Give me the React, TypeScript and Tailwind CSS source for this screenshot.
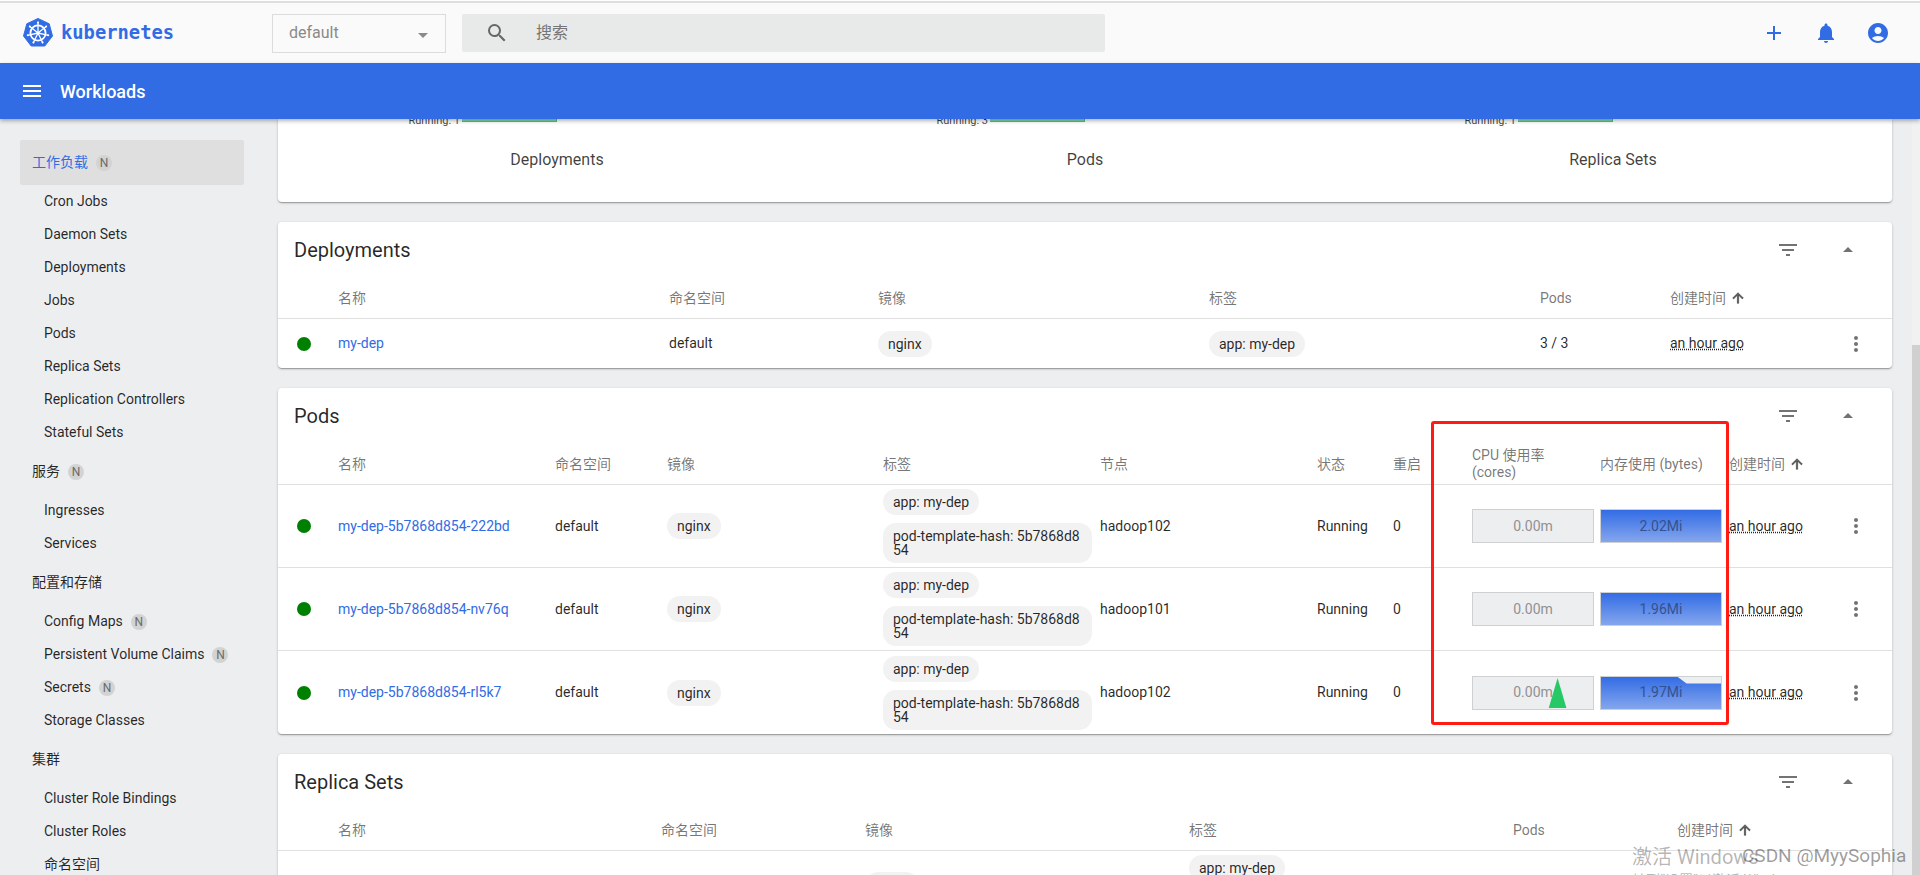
import {
  MdAccountCircle,
  MdAdd,
  MdArrowDropUp,
  MdFilterList,
  MdMenu,
  MdMoreVert,
  MdNotifications,
  MdSearch,
} from 'react-icons/md';

const DEPLOY_COLS = 'grid-cols-[60px_331px_209px_331px_331px_130px_1fr]';
const PODS_COLS = 'grid-cols-[60px_217px_112px_216px_217px_217px_76px_79px_128px_129px_1fr]';
const REPLICA_COLS = 'grid-cols-[60px_323px_204px_324px_324px_164px_1fr]';

const pods = [
  { name: 'my-dep-5b7868d854-222bd', node: 'hadoop102', mem: '2.02Mi', spike: false },
  { name: 'my-dep-5b7868d854-nv76q', node: 'hadoop101', mem: '1.96Mi', spike: false },
  { name: 'my-dep-5b7868d854-rl5k7', node: 'hadoop102', mem: '1.97Mi', spike: true },
];

const navGroups = [
  { title: '工作负载', badge: true, active: true, items: [['Cron Jobs'], ['Daemon Sets'], ['Deployments'], ['Jobs'], ['Pods'], ['Replica Sets'], ['Replication Controllers'], ['Stateful Sets']] },
  { title: '服务', badge: true, items: [['Ingresses'], ['Services']] },
  { title: '配置和存储', items: [['Config Maps', 'N'], ['Persistent Volume Claims', 'N'], ['Secrets', 'N'], ['Storage Classes']] },
  { title: '集群', items: [['Cluster Role Bindings'], ['Cluster Roles'], ['命名空间']] },
];

function KubeLogo() {
  const spokes = [0, 51.4, 102.8, 154.3, 205.7, 257.1, 308.6];
  return (
    <svg width="30" height="30" viewBox="0 0 30 30">
      <path d="M15 0.5 L26.2 5.8 L29.5 18 L21.8 28 L8.2 28 L0.5 18 L3.8 5.8 Z" fill="#326ce5" stroke="#326ce5" strokeWidth="1" strokeLinejoin="round" />
      <circle cx="15" cy="15" r="7.6" fill="none" stroke="#fff" strokeWidth="1.8" />
      <circle cx="15" cy="15" r="1.6" fill="#fff" />
      {spokes.map((a) => (
        <g key={a} transform={`rotate(${a} 15 15)`}>
          <line x1="15" y1="15" x2="15" y2="4.2" stroke="#fff" strokeWidth="1.3" strokeLinecap="round" />
          <circle cx="15" cy="4.6" r="1" fill="#fff" />
        </g>
      ))}
    </svg>
  );
}

function Badge() {
  return (
    <span className="flex h-4 w-4 items-center justify-center rounded-full bg-[#d3d3d3] text-[12px] text-[#6b6b6b]">
      N
    </span>
  );
}

function Sidebar() {
  return (
    <aside className="w-[278px] shrink-0 pt-[21px] text-[14px] text-black/85">
      {navGroups.map((group) => (
        <div key={group.title}>
          <div
            className={`ml-[20px] flex h-[45px] w-[224px] items-center gap-2 rounded-[2px] pl-[12px] ${
              group.active ? 'bg-[#dfdfdf] text-[#326ce5]' : ''
            }`}
          >
            {group.title}
            {group.badge && <Badge />}
          </div>
          {group.items.map(([label, badge]) => (
            <div key={label} className="flex h-[33px] items-center gap-2 pl-[44px]">
              {label}
              {badge && <Badge />}
            </div>
          ))}
        </div>
      ))}
    </aside>
  );
}

function Chip({ children, className = '' }: { children: React.ReactNode; className?: string }) {
  return (
    <span className={`inline-block w-fit rounded-[13px] bg-[#f2f2f2] px-[10px] py-[6px] text-[14px] leading-[14px] text-black/85 ${className}`}>
      {children}
    </span>
  );
}

function CardTitle({ title }: { title: string }) {
  return (
    <div className="flex h-[56px] items-center justify-between pl-[16px] pr-[32px]">
      <h2 className="text-[20px] font-normal text-black/85">{title}</h2>
      <div className="flex items-center gap-[36px] text-black/55">
        <MdFilterList size={24} />
        <MdArrowDropUp size={24} />
      </div>
    </div>
  );
}

function CreatedHead() {
  return (
    <span className="flex items-center gap-[4px]">
      创建时间
      <svg width="16" height="16" viewBox="0 0 24 24" className="text-black/60">
        <path d="M4 12l1.41 1.41L11 7.83V20h2V7.83l5.58 5.59L20 12l-8-8-8 8z" fill="currentColor" stroke="currentColor" strokeWidth="1" />
      </svg>
    </span>
  );
}

function Dot() {
  return <span className="ml-[19px] block h-[14px] w-[14px] rounded-full bg-[#008000]" />;
}

function Age() {
  return <span className="underline decoration-dotted underline-offset-1">an hour ago</span>;
}

function Kebab() {
  return (
    <div className="flex justify-end pr-[24px] text-black/55">
      <MdMoreVert size={24} />
    </div>
  );
}

function Graph({ value, kind, spike }: { value: string; kind: 'cpu' | 'mem'; spike?: boolean }) {
  const memPoints = spike ? '0,0 78,0 87,7 122,7 122,34 0,34' : '0,0 122,0 122,34 0,34';
  return (
    <div className="relative flex h-[34px] w-[122px] items-center justify-center border border-[#cfd0d2] bg-[#edeef0]">
      {kind === 'mem' && (
        <svg className="absolute inset-0 h-full w-full" viewBox="0 0 122 34" preserveAspectRatio="none">
          <defs>
            <linearGradient id="memFill" x1="0" y1="0" x2="0" y2="1">
              <stop offset="0" stopColor="#326ce5" />
              <stop offset="1" stopColor="#85a6ed" />
            </linearGradient>
          </defs>
          <polygon points={memPoints} fill="url(#memFill)" />
        </svg>
      )}
      <span className={`relative text-[14px] ${kind === 'mem' ? 'text-[#34528f]' : 'text-[#909193]'}`}>{value}</span>
      {kind === 'cpu' && spike && (
        <svg className="absolute inset-0 h-full w-full" viewBox="0 0 122 34" preserveAspectRatio="none">
          <polygon points="86,1 77,33 95,33" fill="#27c866" />
        </svg>
      )}
    </div>
  );
}

function ChartLabel({ running, label }: { running: string; label: string }) {
  return (
    <div>
      <div className="flex h-[9px] w-[264px] items-start justify-end gap-[2px] overflow-hidden">
        <span className="-mt-[5px] whitespace-nowrap text-[11px] leading-[14px] text-black/75">{running}</span>
        <span className="block h-[3px] w-[95px] shrink-0 border-b border-r border-[#4fc47f] bg-[#7ddca3]" />
      </div>
      <div className="mt-[20px] text-center text-[16px] leading-[24px] text-black/75">{label}</div>
    </div>
  );
}

const cardClass =
  'rounded-[4px] bg-white shadow-[0_1px_3px_rgba(0,0,0,0.2),0_1px_1px_rgba(0,0,0,0.14),0_2px_1px_-1px_rgba(0,0,0,0.12)]';

export default function App() {
  return (
    <div className="flex h-[875px] w-[1920px] flex-col overflow-hidden bg-[#edeef0] font-['Roboto','Noto_Sans_CJK_SC',sans-serif] text-[14px]">
      <div className="h-[3px] border-b-2 border-[#dedede] bg-white" />
      <header className="flex h-[60px] items-center bg-[#fafafa]">
        <div className="ml-[23px] flex w-[249px] items-center gap-[8px]">
          <KubeLogo />
          <span className="font-['DejaVu_Sans_Mono',monospace] text-[18.8px] font-bold text-[#326ce5]">kubernetes</span>
        </div>
        <div className="relative flex h-[39px] w-[174px] items-center border border-[#dcdcdc] pl-[16px] text-[16px] text-[#8a8a8a]">
          default
          <span className="absolute right-[17px] top-[18px] h-0 w-0 border-x-[5px] border-t-[5px] border-x-transparent border-t-[#8a8a8a]" />
        </div>
        <div className="ml-[16px] flex h-[38px] w-[643px] items-center rounded-[2px] bg-[#e8eaea] pl-[23px] text-[16px] text-[#757575]">
          <MdSearch size={24} className="text-[#666]" />
          <span className="ml-[27px]">搜索</span>
        </div>
        <div className="ml-auto mr-[30px] flex items-center gap-[28px] text-[#326ce5]">
          <MdAdd size={24} />
          <MdNotifications size={24} />
          <MdAccountCircle size={24} />
        </div>
      </header>
      <div className="relative z-10 flex h-[56px] items-center bg-[#326ce5] pl-[20px] text-white shadow-[0_2px_4px_rgba(0,0,0,0.3)]">
        <MdMenu size={24} />
        <span className="ml-[16px] text-[18px] font-medium">Workloads</span>
      </div>

      <div className="flex min-h-0 flex-1">
        <Sidebar />
        <main className="flex min-w-0 flex-1 flex-col gap-[20px] pr-[20px]">
          <section className={`${cardClass} h-[83px] shrink-0 rounded-t-none`}>
            <div className="grid grid-cols-3 px-[15px]">
              <ChartLabel running="Running: 1" label="Deployments" />
              <ChartLabel running="Running: 3" label="Pods" />
              <ChartLabel running="Running: 1" label="Replica Sets" />
            </div>
          </section>

          <section className={`${cardClass} shrink-0`}>
            <CardTitle title="Deployments" />
            <div className={`grid h-[41px] items-center border-b border-[#e0e0e0] text-black/55 ${DEPLOY_COLS}`}>
              <span />
              <span>名称</span>
              <span>命名空间</span>
              <span>镜像</span>
              <span>标签</span>
              <span>Pods</span>
              <CreatedHead />
            </div>
            <div className={`grid h-[49px] items-center text-black/85 ${DEPLOY_COLS}`}>
              <Dot />
              <span className="text-[#326ce5]">my-dep</span>
              <span>default</span>
              <Chip>nginx</Chip>
              <Chip>app: my-dep</Chip>
              <span>3 / 3</span>
              <div className="flex items-center justify-between">
                <Age />
                <Kebab />
              </div>
            </div>
          </section>

          <section className={`${cardClass} relative shrink-0`}>
            <CardTitle title="Pods" />
            <div className={`grid h-[41px] items-center border-b border-[#e0e0e0] leading-[17px] text-black/55 ${PODS_COLS}`}>
              <span />
              <span>名称</span>
              <span>命名空间</span>
              <span>镜像</span>
              <span>标签</span>
              <span>节点</span>
              <span>状态</span>
              <span>重启</span>
              <span>
                CPU 使用率
                <br />
                (cores)
              </span>
              <span>内存使用 (bytes)</span>
              <CreatedHead />
            </div>
            {pods.map((pod, i) => (
              <div
                key={pod.name}
                className={`grid h-[83px] items-center text-black/85 ${PODS_COLS} ${i < 2 ? 'border-b border-[#e0e0e0]' : ''}`}
              >
                <Dot />
                <span className="text-[#326ce5]">{pod.name}</span>
                <span>default</span>
                <Chip>nginx</Chip>
                <div className="flex flex-col gap-[8px]">
                  <Chip>app: my-dep</Chip>
                  <Chip className="max-w-[209px] break-all">pod-template-hash: 5b7868d854</Chip>
                </div>
                <span>{pod.node}</span>
                <span>Running</span>
                <span>0</span>
                <Graph value="0.00m" kind="cpu" spike={pod.spike} />
                <Graph value={pod.mem} kind="mem" spike={pod.spike} />
                <div className="flex items-center justify-between">
                  <Age />
                  <Kebab />
                </div>
              </div>
            ))}
            <div className="absolute left-[1153px] top-[33px] h-[304px] w-[298px] rounded-[3px] border-[3px] border-[#ff1a14]" />
          </section>

          <section className={`${cardClass} shrink-0`}>
            <CardTitle title="Replica Sets" />
            <div className={`grid h-[41px] items-center border-b border-[#e0e0e0] text-black/55 ${REPLICA_COLS}`}>
              <span />
              <span>名称</span>
              <span>命名空间</span>
              <span>镜像</span>
              <span>标签</span>
              <span>Pods</span>
              <CreatedHead />
            </div>
            <div className={`grid h-[67px] items-center text-black/85 ${REPLICA_COLS}`}>
              <Dot />
              <span className="text-[#326ce5]">my-dep-5b7868d854</span>
              <span>default</span>
              <Chip>nginx</Chip>
              <div className="flex flex-col gap-[8px]">
                <Chip>app: my-dep</Chip>
                <Chip>pod-template-hash: 5b7868d854</Chip>
              </div>
              <span>3 / 3</span>
              <Age />
            </div>
          </section>
        </main>
        <div className="flex w-[8px] shrink-0 flex-col bg-[#f1f1f1]">
          <div className="mt-[226px] flex-1 bg-[#d0d0d0]" />
        </div>
      </div>

      <div className="absolute left-[1632px] top-[843px] z-20 whitespace-nowrap text-[20px] leading-[28px] text-black/30">
        激活 Windows
        <div className="text-[14px] leading-[18px]">转到“设置”以激活 Windows。</div>
      </div>
      <div className="absolute left-[1742px] top-[843px] z-20 whitespace-nowrap text-[19px] leading-[26px] text-black/40">
        CSDN @MyySophia
      </div>
    </div>
  );
}
